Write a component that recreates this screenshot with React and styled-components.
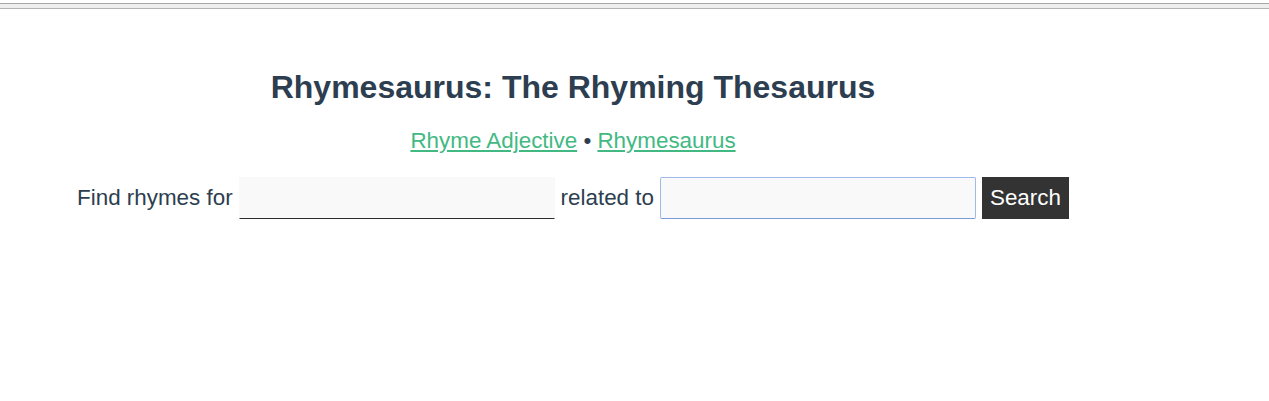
import styled, { createGlobalStyle } from "styled-components";

const GlobalStyle = createGlobalStyle`
  html, body {
    margin: 0;
    padding: 0;
    background: #ffffff;
  }
  body {
    font-family: "Liberation Sans", Arial, Helvetica, sans-serif;
    color: #2c3e50;
  }
`;

const FrameEdge = styled.div`
  margin-top: 3px;
  height: 4px;
  background: #eeeeee;
  border-top: 1px solid #a8a8a8;
  border-bottom: 1px solid #b4b4b4;
`;

const Page = styled.div`
  width: 1146px;
  text-align: center;
`;

const Title = styled.h1`
  margin: 60px 0 0;
  font-size: 32px;
  font-weight: 700;
  line-height: 37px;
  color: #2c3e50;
`;

const Nav = styled.p`
  margin: 22px 0 0;
  font-size: 22.4px;
  line-height: 26px;
  color: #2c3e50;
`;

const NavLink = styled.a`
  color: #42b983;
  text-decoration: underline;
`;

const SearchForm = styled.form`
  margin-top: 23px;
  display: flex;
  justify-content: center;
  align-items: center;
  gap: 6px;
  font-size: 22.4px;
  color: #2c3e50;
`;

const Label = styled.span`
  line-height: 26px;
`;

const WordInput = styled.input`
  box-sizing: border-box;
  width: 316px;
  height: 42px;
  padding: 0 8px;
  font-family: inherit;
  font-size: 22.4px;
  color: #2c3e50;
  background: #f9f9f9;
  border: 1px solid ${({ $focused }) => ($focused ? "#9fb9e8" : "transparent")};
  border-bottom: 1px solid ${({ $focused }) => ($focused ? "#7a9bd6" : "#2c2c2c")};
  border-radius: ${({ $focused }) => ($focused ? "2px" : "0")};
  outline: none;
  caret-color: #222;
`;

const SearchButton = styled.button`
  box-sizing: border-box;
  height: 42px;
  padding: 0 8px;
  font-family: inherit;
  font-size: 22.4px;
  color: #ffffff;
  background: #333333;
  border: none;
  border-radius: 0;
  cursor: pointer;
`;

export default function App() {
  return (
    <>
      <GlobalStyle />
      <FrameEdge />
      <Page>
        <Title>Rhymesaurus: The Rhyming Thesaurus</Title>
        <Nav>
          <NavLink href="#">Rhyme Adjective</NavLink> • <NavLink href="#">Rhymesaurus</NavLink>
        </Nav>
        <SearchForm onSubmit={(e) => e.preventDefault()}>
          <Label>Find rhymes for</Label>
          <WordInput type="text" />
          <Label>related to</Label>
          <WordInput type="text" $focused autoFocus />
          <SearchButton type="submit">Search</SearchButton>
        </SearchForm>
      </Page>
    </>
  );
}
